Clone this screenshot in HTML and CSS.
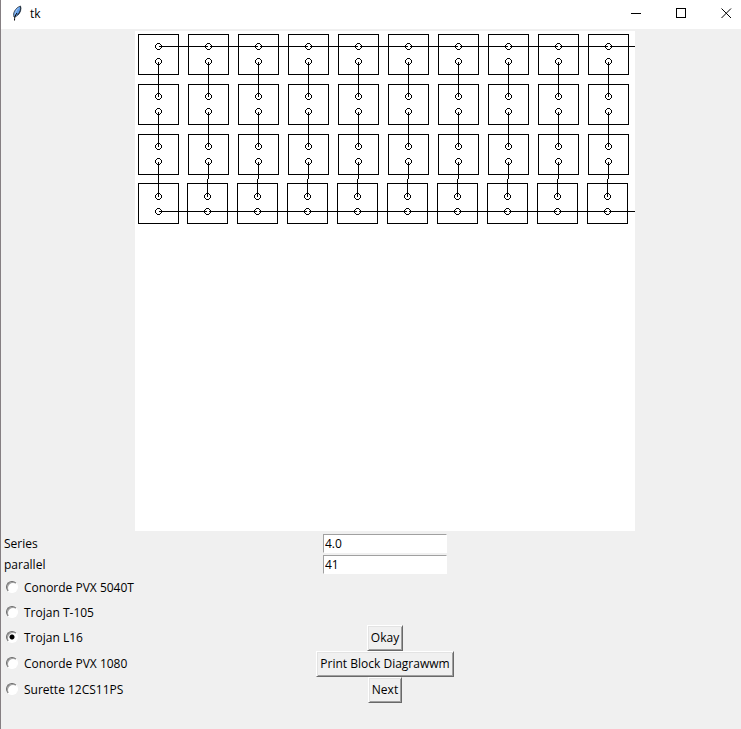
FILE: index.html
```html
<!DOCTYPE html>
<html lang="en">
<head>
<meta charset="utf-8">
<title>tk</title>
<link rel="stylesheet" href="styles.css">
</head>
<body>
<div class="window">
  <header class="titlebar">
    <svg class="feather" width="16" height="16" viewBox="0 0 16 16" aria-hidden="true">
      <path d="M5 12C3.500 8.500 6 3 11.500 1c1 3 0 6.500-2.500 9-1 1-2 1.500-4 2z" fill="#5f9be6" stroke="#4a5560"/>
      <path d="M9.500 3C7.500 5 6.500 7 6 9.500" fill="none" stroke="#a4cbf8"/>
      <path d="M11.500 1.500c.5 3-.5 6-3 8.500" fill="none" stroke="#22303f"/>
      <path d="M8 8C6 10.500 5.500 12.500 5.500 15.500" fill="none" stroke="#000"/>
    </svg>
    <h1 class="title">tk</h1>
    <div class="controls">
      <button class="control" type="button" aria-label="Minimize"><svg width="11" height="11"><path d="M0 5.500h10"/></svg></button>
      <button class="control" type="button" aria-label="Maximize"><svg width="11" height="11"><path d="M.5.5h9v9h-9z"/></svg></button>
      <button class="control" type="button" aria-label="Close"><svg width="11" height="11"><path d="M.5.5l9.500 9.500M10 .5L.5 10" shape-rendering="auto"/></svg></button>
    </div>
  </header>
  <form class="content">
    <svg class="diagram" id="diagram" width="500" height="500" role="img" aria-label="Battery block diagram"></svg>

    <label class="field-label" for="series">Series</label>
    <input class="entry" id="series" type="text" value="4.0">
    <label class="field-label" for="parallel">parallel</label>
    <input class="entry" id="parallel" type="text" value="41">

    <label class="choice"><input type="radio" name="battery">Conorde PVX 5040T</label>
    <label class="choice"><input type="radio" name="battery">Trojan T-105</label>
    <label class="choice"><input type="radio" name="battery" checked>Trojan L16</label>
    <button class="button" type="button">Okay</button>
    <label class="choice"><input type="radio" name="battery">Conorde PVX 1080</label>
    <button class="button" type="button">Print Block Diagrawwm</button>
    <label class="choice"><input type="radio" name="battery">Surette 12CS11PS</label>
    <button class="button" type="button">Next</button>
  </form>
</div>
<script src="diagram.js"></script>
</body>
</html>
```
FILE: styles.css
```css
* {
  box-sizing: border-box;
}

body {
  margin: 0;
  background: #f0f0f0;
  color: #000;
  font: 12px/16px "Open Sans", "Noto Sans", sans-serif;
}

.window {
  min-height: 100vh;
  border-left: 1px solid #857f82;
}

.titlebar {
  display: flex;
  align-items: center;
  height: 29px;
  padding: 0 0 2px 8px;
  overflow: hidden;
  background: #fff;
}

.feather {
  margin-bottom: 2px;
}

.title {
  flex: 1;
  margin: 0 0 0 5px;
  font-size: 12px;
  font-weight: 400;
}

.controls {
  display: flex;
  margin-right: -7px;
}

.control {
  display: grid;
  place-items: center;
  width: 46px;
  height: 26px;
  margin-right: -1px;
  padding: 0;
  border: 0;
  background: none;
}

.control svg {
  fill: none;
  stroke: #000;
  shape-rendering: crispEdges;
}

.content {
  display: grid;
  grid-template-columns: 134px 500px;
  grid-template-rows: 504px 21px 21px 25px 25px 26px 26px 26px;
  align-items: center;
}

.diagram {
  grid-column: 2;
  background: #fff;
  fill: none;
  stroke: #000;
  shape-rendering: crispEdges;
}

.field-label {
  grid-column: 1;
  padding-left: 3px;
}

.entry {
  grid-column: 2;
  justify-self: center;
  width: 124px;
  height: 19px;
  padding: 0 1px;
  border: 1px solid #fff;
  border-top-color: #a0a0a0;
  border-left-color: #a0a0a0;
  background: #fff;
  color: inherit;
  font: inherit;
}

.choice {
  grid-column: 1;
  display: flex;
  align-items: center;
  gap: 6px;
  padding-left: 5px;
  white-space: nowrap;
}

.choice input {
  appearance: none;
  width: 12px;
  height: 12px;
  margin: 0 0 2px;
  border: 1px solid;
  border-color: #696969 #fff #fff #696969;
  border-radius: 50%;
  background: #fff;
  box-shadow: inset 1px 1px 0 #a0a0a0;
}

.choice input:checked {
  background: radial-gradient(circle, #000 2px, #fff 3px);
}

.button {
  grid-column: 2;
  justify-self: center;
  height: 26px;
  padding: 0 3px;
  border: 1px solid;
  border-color: #fff #696969 #696969 #fff;
  background: #f0f0f0;
  box-shadow: inset 1px 1px 0 #e3e3e3, inset -1px -1px 0 #a0a0a0;
  color: inherit;
  font: inherit;
}
```
FILE: diagram.js
```js
const svg = document.getElementById("diagram");
const ROWS = 4;
const COLUMNS = 10;
const PITCH = 50;

function add(tag, attributes) {
  const node = document.createElementNS("http://www.w3.org/2000/svg", tag);
  for (const name in attributes) node.setAttribute(name, attributes[name]);
  svg.append(node);
}

// The last row rounds down by one pixel after the first column.
function centreX(row, column) {
  return column * PITCH + 23.5 - (row === ROWS - 1 && column > 0 ? 1 : 0);
}

// A seven-pixel ring: four three-pixel sides joined by single corner pixels.
function addTerminal(x, y) {
  add("path", {
    d: `M${x - 1.5} ${y - 3}h3m0 1h1m.5 .5v3m-.5 .5h-1m0 1h-3m0 -1h-1m-.5 -.5v-3m.5 -.5h1`
  });
}

// Joins the terminals of one row, with a small break inside each terminal.
function addBus(row, y) {
  for (let column = 0; column < COLUMNS; column++) {
    const start = centreX(row, column) + (column > 0 ? 1 : 0);
    const end = column < COLUMNS - 1 ? centreX(row, column + 1) - 1 : COLUMNS * PITCH;
    add("path", { d: `M${start} ${y}H${end}` });
  }
}

for (let row = 0; row < ROWS; row++) {
  const last = row === ROWS - 1;
  const top = row * PITCH + 15.5;
  for (let column = 0; column < COLUMNS; column++) {
    const x = centreX(row, column);
    const boxTop = top - (last ? 13 : 12);
    add("path", { d: `M${x - 20} ${boxTop}h40v40h-40z` });
    addTerminal(x, top);
    addTerminal(x, top + 15);
    if (!last) {
      const next = centreX(row + 1, column);
      add("path", { d: `M${x} ${top + 15}V${top + 32}` });
      add("path", { d: `M${next} ${top + 32}V${top + 50}` });
    }
  }
}
addBus(0, 15.5);
addBus(ROWS - 1, (ROWS - 1) * PITCH + 30.5);
```
